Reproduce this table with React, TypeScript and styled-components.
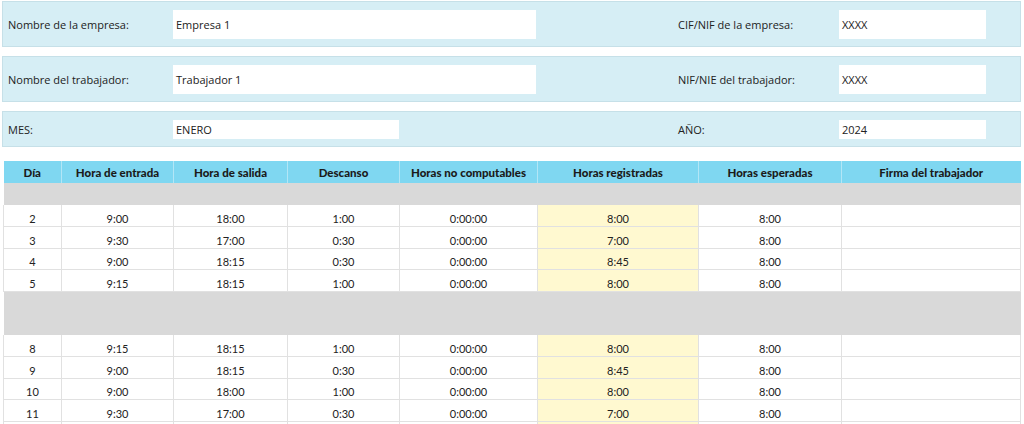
import React from "react";
import styled, { createGlobalStyle } from "styled-components";

const Global = createGlobalStyle`
  html, body { margin: 0; padding: 0; background: #ffffff; overflow: hidden; }
  body { font-family: "Open Sans", "Liberation Sans", sans-serif; color: #222; }
`;

const Page = styled.div`
  padding: 1px 3px 0 2px;
  width: 1019px;
  display: flex;
  flex-direction: column;
`;

const InfoBox = styled.div<{ $h: number; $gapAfter: number }>`
  box-sizing: border-box;
  height: ${(p) => p.$h}px;
  margin-bottom: ${(p) => p.$gapAfter}px;
  background: #d6eef5;
  border: 1px solid #c6e0e8;
  display: grid;
  grid-template-columns: 170px 363px 142px 161px 147px 1fr;
  align-items: center;
`;

const Label = styled.div<{ $pad: number }>`
  font-size: 11px;
  color: #222;
  padding-left: ${(p) => p.$pad}px;
  white-space: nowrap;
`;

const Field = styled.div<{ $h: number; $w?: number }>`
  box-sizing: border-box;
  height: ${(p) => p.$h}px;
  width: ${(p) => (p.$w ? `${p.$w}px` : "100%")};
  background: #ffffff;
  font-size: 11px;
  display: flex;
  align-items: center;
  padding-left: 3px;
  color: #222;
`;

const Spacer = styled.div``;

const Table = styled.table`
  margin-top: 14px;
  margin-left: 1px;
  border-collapse: collapse;
  table-layout: fixed;
  width: 1017px;
  font-family: Lato, "Open Sans", sans-serif;
  font-size: 11px;
  color: #222;
`;

const Head = styled.th`
  background: #7fd7f1;
  height: 22px;
  padding: 0;
  font-weight: 900;
  font-size: 11.5px;
  color: #1b1b1b;
  text-align: center;
  border-left: 1px solid #b3e6f6;
  &:first-child { border-left: none; }
`;

const GapRow = styled.tr<{ $h: number }>`
  height: ${(p) => p.$h}px;
  background: #d9d9d9;
`;

const GapCell = styled.td`
  padding: 0;
`;

const Cell = styled.td<{ $hl?: boolean }>`
  height: 21.5px;
  padding: 6px 0 0 0;
  box-sizing: border-box;
  text-align: center;
  vertical-align: middle;
  background: ${(p) => (p.$hl ? "#fff9d0" : "#ffffff")};
  border: 1px solid #e1e1e1;
  border-top: none;
  line-height: 1;
`;

const cols = [58, 112, 114, 112, 138, 161, 143, 179];
const headers = [
  "Día",
  "Hora de entrada",
  "Hora de salida",
  "Descanso",
  "Horas no computables",
  "Horas registradas",
  "Horas esperadas",
  "Firma del trabajador",
];

type Row = [string, string, string, string, string, string, string];

const week1: Row[] = [
  ["2", "9:00", "18:00", "1:00", "0:00:00", "8:00", "8:00"],
  ["3", "9:30", "17:00", "0:30", "0:00:00", "7:00", "8:00"],
  ["4", "9:00", "18:15", "0:30", "0:00:00", "8:45", "8:00"],
  ["5", "9:15", "18:15", "1:00", "0:00:00", "8:00", "8:00"],
];
const week2: Row[] = [
  ["8", "9:15", "18:15", "1:00", "0:00:00", "8:00", "8:00"],
  ["9", "9:00", "18:15", "0:30", "0:00:00", "8:45", "8:00"],
  ["10", "9:00", "18:00", "1:00", "0:00:00", "8:00", "8:00"],
  ["11", "9:30", "17:00", "0:30", "0:00:00", "7:00", "8:00"],
  ["", "", "", "", "", "", ""],
];

const DataRow: React.FC<{ r: Row }> = ({ r }) => (
  <tr>
    {r.map((v, i) => (
      <Cell key={i} $hl={i === 5}>
        {v}
      </Cell>
    ))}
    <Cell />
  </tr>
);

export default function App() {
  return (
    <>
      <Global />
      <Page>
        <InfoBox $h={46} $gapAfter={9}>
          <Label $pad={5}>Nombre de la empresa:</Label>
          <Field $h={29}>Empresa 1</Field>
          <Spacer />
          <Label $pad={0}>CIF/NIF de la empresa:</Label>
          <Field $h={29}>XXXX</Field>
          <Spacer />
        </InfoBox>
        <InfoBox $h={46} $gapAfter={9}>
          <Label $pad={5}>Nombre del trabajador:</Label>
          <Field $h={29}>Trabajador 1</Field>
          <Spacer />
          <Label $pad={0}>NIF/NIE del trabajador:</Label>
          <Field $h={29}>XXXX</Field>
          <Spacer />
        </InfoBox>
        <InfoBox $h={36} $gapAfter={0}>
          <Label $pad={5}>MES:</Label>
          <Field $h={19} $w={226}>ENERO</Field>
          <Spacer />
          <Label $pad={0}>AÑO:</Label>
          <Field $h={19}>2024</Field>
          <Spacer />
        </InfoBox>
        <Table>
          <colgroup>
            {cols.map((w, i) => (
              <col key={i} style={{ width: w }} />
            ))}
          </colgroup>
          <thead>
            <tr>
              {headers.map((h) => (
                <Head key={h}>{h}</Head>
              ))}
            </tr>
          </thead>
          <tbody>
            <GapRow $h={22}>
              <GapCell colSpan={8} />
            </GapRow>
            {week1.map((r, i) => (
              <DataRow key={`a${i}`} r={r} />
            ))}
            <GapRow $h={44}>
              <GapCell colSpan={8} />
            </GapRow>
            {week2.map((r, i) => (
              <DataRow key={`b${i}`} r={r} />
            ))}
          </tbody>
        </Table>
      </Page>
    </>
  );
}
